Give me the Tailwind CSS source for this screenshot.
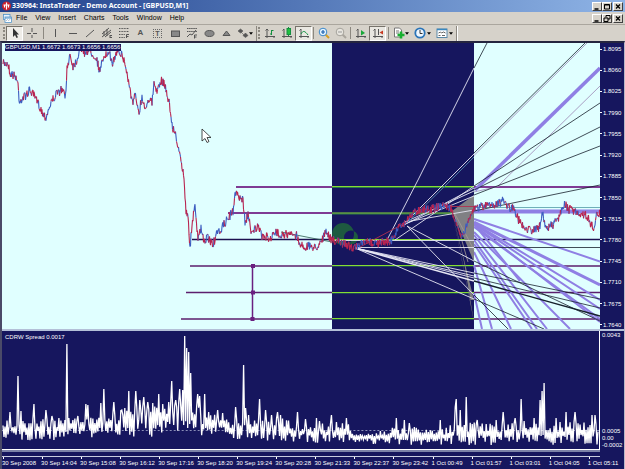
<!DOCTYPE html>
<html lang="en">
<head>
  <meta charset="UTF-8">
  <meta name="viewport" content="width=device-width, initial-scale=1.0">
  <title>330964: InstaTrader - Demo Account - [GBPUSD,M1]</title>
  <script src="https://cdn.jsdelivr.net/npm/@tailwindcss/browser@4"></script>
</head>
<body class="flex h-screen flex-col overflow-hidden bg-[#d6d2ca] font-['Liberation_Sans',Arial,sans-serif] text-[7px] leading-[10px] text-black">

  <!-- Title bar -->
  <header class="flex h-3 shrink-0 items-center bg-linear-to-r from-[#22418c] to-[#8fb4e6] pl-[2px] pr-[2px] text-white">
    <svg class="mr-px h-[10px] w-[9px]" viewBox="0 0 18 20">
      <circle cx="9" cy="10" r="9" fill="#c8202c"/>
      <path d="M9 3v14M5 8v5M13 8v5M3 8h12" stroke="#fff" stroke-width="2.400" fill="none"/>
    </svg>
    <h1 class="grow font-['Noto_Sans',sans-serif] font-bold whitespace-nowrap">330964: InstaTrader - Demo Account - [GBPUSD,M1]</h1>
    <div class="flex">
      <button aria-label="Minimize" class="h-[9px] w-[10px] border border-t-white border-l-white border-r-[#404040] border-b-[#404040] bg-[#d6d2ca]"><svg class="size-full" viewBox="0 0 8 7"><path d="M1.500 6h4" stroke="#000" stroke-width="1.500"/></svg></button>
      <button aria-label="Maximize" class="h-[9px] w-[10px] border border-t-white border-l-white border-r-[#404040] border-b-[#404040] bg-[#d6d2ca]"><svg class="size-full" viewBox="0 0 8 7"><path d="M1.500 1.500h5v4.500h-5zM1.500 2h5" stroke="#000" fill="none"/></svg></button>
      <button aria-label="Close" class="ml-px h-[9px] w-[10px] border border-t-white border-l-white border-r-[#404040] border-b-[#404040] bg-[#d6d2ca]"><svg class="size-full" viewBox="0 0 8 7"><path d="M2 1.500l4 4M6 1.500l-4 4" stroke="#000" stroke-width="1.300"/></svg></button>
    </div>
  </header>

  <!-- Menu -->
  <nav class="flex h-3 shrink-0 items-center pl-[3px] pr-[2px]">
    <svg class="mr-[4px] size-[9px]" viewBox="0 0 18 18">
      <rect x="1" y="1" width="13" height="10" fill="#e8f4ff" stroke="#4a90c8" stroke-width="1.500"/>
      <rect x="4" y="6" width="13" height="11" fill="#fff" stroke="#4a90c8" stroke-width="1.500"/>
      <path d="M4 8h13" stroke="#4a90c8" stroke-width="2"/><path d="M6 14l3-3 2 2 4-3" stroke="#68a" fill="none"/>
    </svg>
    <div class="flex grow gap-[8px]">
      <button>File</button>
      <button>View</button>
      <button>Insert</button>
      <button>Charts</button>
      <button>Tools</button>
      <button>Window</button>
      <button>Help</button>
    </div>
    <div class="flex">
      <button aria-label="Minimize chart" class="h-[9px] w-[10px] border border-t-white border-l-white border-r-[#404040] border-b-[#404040]"><svg class="size-full" viewBox="0 0 8 7"><path d="M1.500 6h4" stroke="#000" stroke-width="1.500"/></svg></button>
      <button aria-label="Restore chart" class="h-[9px] w-[10px] border border-t-white border-l-white border-r-[#404040] border-b-[#404040]"><svg class="size-full" viewBox="0 0 8 7"><path d="M3 2.500v-2h4v3.500h-2M1 3h4v3.500h-4z" stroke="#000" fill="none"/></svg></button>
      <button aria-label="Close chart" class="ml-px h-[9px] w-[10px] border border-t-white border-l-white border-r-[#404040] border-b-[#404040]"><svg class="size-full" viewBox="0 0 8 7"><path d="M2 1.500l4 4M6 1.500l-4 4" stroke="#000" stroke-width="1.300"/></svg></button>
    </div>
  </nav>

  <!-- Toolbar -->
  <div role="toolbar" class="flex h-[17px] shrink-0 items-center border-t border-[#aaa69e] pl-[3px] text-[#555]">
    <span class="mr-px h-3 border-l-2 border-dotted border-[#8c8880]"></span>
    <button aria-label="Cursor" class="flex h-[15px] w-[17px] items-center justify-center border border-t-[#77736b] border-l-[#77736b] border-r-white border-b-white bg-[#efede8]"><svg class="size-3" viewBox="0 0 12 12"><path d="M4 1v9l2-2 1.500 3 1.500-.8L7.500 7.500H10z" fill="#333"/></svg></button>
    <button aria-label="Crosshair" class="flex w-[17px] justify-center"><svg class="size-3" viewBox="0 0 12 12"><path d="M6 1v4M6 8v3M1 6.500h4M7 6.500h4" stroke="currentColor"/></svg></button>
    <span class="mx-[3px] h-3 w-px bg-[#8c8880]"></span>
    <button aria-label="Vertical line" class="flex w-[17px] justify-center"><svg class="size-3" viewBox="0 0 12 12"><path d="M5.500 2v8" stroke="currentColor"/></svg></button>
    <button aria-label="Horizontal line" class="flex w-[17px] justify-center"><svg class="size-3" viewBox="0 0 12 12"><path d="M2 6.500h8" stroke="currentColor"/></svg></button>
    <button aria-label="Trendline" class="flex w-[17px] justify-center"><svg class="size-3" viewBox="0 0 12 12"><path d="M2 10l8-7" stroke="currentColor"/></svg></button>
    <button aria-label="Channel" class="flex w-[17px] justify-center"><svg class="size-3" viewBox="0 0 12 12"><path d="M1 7l7-6M1 10l9-7M4 10l6-5M3 4v5M6 2v7M9 8v3M9 8.500h2M9 10.500h2" stroke="currentColor" fill="none"/></svg></button>
    <button aria-label="Fibonacci retracement" class="flex w-[17px] justify-center"><svg class="size-3" viewBox="0 0 12 12"><path d="M1 1.500h10M1 4.500h10M1 7.500h6M1 10.500h6" stroke="currentColor" stroke-dasharray="1 .6"/><path d="M8.500 11V7.500h2.500M8.500 9.500h2" stroke="currentColor" fill="none"/></svg></button>
    <button aria-label="Text" class="w-[17px] text-[8px] font-bold">A</button>
    <button aria-label="Text label" class="flex w-[17px] justify-center"><span class="h-[9px] w-[9px] border border-dotted border-[#666] text-center text-[7px] leading-[7px] font-bold">T</span></button>
    <button aria-label="Rectangle" class="flex w-[17px] justify-center"><svg class="size-3" viewBox="0 0 12 12"><rect x="2.500" y="4" width="8" height="5.500" fill="#888" stroke="currentColor"/></svg></button>
    <button aria-label="Fibonacci fan" class="flex w-[17px] justify-center"><svg class="size-3" viewBox="0 0 12 12"><path d="M1 1.500h10M1 4.500h10" stroke="currentColor" stroke-dasharray="1.500 .6"/><path d="M1 10l3-3 2 1 4-5M8.500 11.500V8h2.500M8.500 10h2" stroke="currentColor" fill="none"/></svg></button>
    <button aria-label="Ellipse" class="flex w-[17px] justify-center"><svg class="size-3" viewBox="0 0 12 12"><ellipse cx="6.500" cy="6.500" rx="4.500" ry="3" fill="#888" stroke="currentColor"/></svg></button>
    <button aria-label="Triangle" class="flex w-[17px] justify-center"><svg class="size-3" viewBox="0 0 12 12"><path d="M6.500 4L10 8.500H3z" fill="#888" stroke="currentColor"/></svg></button>
    <button aria-label="Arrows" class="flex w-[19px] items-center justify-end"><svg class="size-3" viewBox="0 0 12 12"><path d="M1 4l2.500-2L6 4 3.500 6zM6 8.500L8.500 6l2.500 2.500-2.500 2zM4 5l4 4" fill="#555" stroke="#555" stroke-width=".6"/></svg><svg class="h-[3px] w-[4px]" viewBox="0 0 5 3"><path d="M0 0h5L2.500 3z" fill="#000"/></svg></button>
    <span class="ml-[3px] mr-px h-[15px] w-px bg-[#8c8880]"></span>
    <span class="mr-px h-3 border-l-2 border-dotted border-[#8c8880]"></span>
    <button aria-label="Bar chart" class="flex w-[17px] justify-center"><svg class="size-3" viewBox="0 0 12 12"><path d="M3 2v9M1 9.500h10M10 9v2M1.500 3.500L3 2l1.500 1.500" stroke="currentColor" fill="none"/><path d="M7.500 3v5M7.500 3.500h2M6 7h1.500" stroke="#149040"/></svg></button>
    <button aria-label="Candlesticks" class="flex w-[17px] justify-center"><svg class="size-3" viewBox="0 0 12 12"><path d="M3 2v9M1 9.500h10M10 9v2M1.500 3.500L3 2" stroke="currentColor" fill="none"/><path d="M7.500 0v9" stroke="#149040"/><rect x="6" y="1.500" width="3.500" height="6" fill="#20c040" stroke="#149040"/></svg></button>
    <button aria-label="Line chart" class="flex h-[15px] w-[17px] items-center justify-center border border-t-[#77736b] border-l-[#77736b] border-r-white border-b-white bg-[#e9e7e1]"><svg class="size-3" viewBox="0 0 12 12"><path d="M3 2v9M1 9.500h10M10 9v2M1.500 3.500L3 2" stroke="currentColor" fill="none"/><path d="M3 7c2-4 4-3 7 1" stroke="#149040" fill="none"/></svg></button>
    <span class="mx-px h-3 w-px bg-[#8c8880]"></span>
    <button aria-label="Zoom in" class="flex w-[17px] justify-center"><svg class="size-3" viewBox="0 0 12 12"><path d="M7.500 7.500L11 11" stroke="#d8a020" stroke-width="2"/><circle cx="5" cy="5" r="3.800" fill="#e4f4ff" stroke="#3a86c8"/><path d="M3 5h4M5 3v4" stroke="#1a60b0" stroke-width="1.200"/></svg></button>
    <button aria-label="Zoom out" class="flex w-[17px] justify-center"><svg class="size-3" viewBox="0 0 12 12"><path d="M7.500 7.500L11 11" stroke="#aaa69e" stroke-width="2"/><circle cx="5" cy="5" r="3.800" fill="#e8e6e0" stroke="#a5a29b"/><path d="M3 5h4" stroke="#999"/></svg></button>
    <span class="mx-px h-3 w-px bg-[#8c8880]"></span>
    <button aria-label="Auto scroll" class="flex w-[17px] justify-center"><svg class="size-3" viewBox="0 0 12 12"><path d="M3 2v9M1 9.500h10M10 9v2M1.500 3.500L3 2" stroke="currentColor" fill="none"/><path d="M6 3l4 3-4 2.500z" fill="#18a838"/></svg></button>
    <button aria-label="Chart shift" class="flex h-[15px] w-[17px] items-center justify-center border border-t-[#77736b] border-l-[#77736b] border-r-white border-b-white bg-[#e9e7e1]"><svg class="size-3" viewBox="0 0 12 12"><path d="M3 2v9M1 9.500h10M10 9v2M1.500 3.500L3 2M6.500 2v6" stroke="currentColor" fill="none"/><path d="M11 3.500v4L7.500 5.500z" fill="#c83820"/></svg></button>
    <span class="mx-[2px] h-3 w-px bg-[#8c8880]"></span>
    <button aria-label="Indicators" class="flex w-[19px] items-center justify-center"><svg class="size-3" viewBox="0 0 12 12"><path d="M1.500 1h5l2 2v7h-7z" fill="#fff" stroke="#777"/><path d="M3 4h3M3 6h3" stroke="#777"/><path d="M8 4.500v7M4.500 8h7" stroke="#18b030" stroke-width="2.600"/></svg><svg class="h-[3px] w-[4px]" viewBox="0 0 5 3"><path d="M0 0h5L2.500 3z" fill="#000"/></svg></button>
    <button aria-label="Periodicity" class="ml-[3px] flex w-[19px] items-center justify-center"><svg class="mr-px size-3" viewBox="0 0 12 12"><circle cx="6" cy="6" r="4.700" fill="#eef7ff" stroke="#2a74b8" stroke-width="1.800"/><path d="M6 3v3.500h2.500" stroke="#333" fill="none"/></svg><svg class="h-[3px] w-[4px]" viewBox="0 0 5 3"><path d="M0 0h5L2.500 3z" fill="#000"/></svg></button>
    <button aria-label="Templates" class="ml-[3px] flex w-[19px] items-center justify-center"><svg class="mr-px size-3" viewBox="0 0 12 12"><rect x="1" y="2" width="10" height="8.500" fill="#fff" stroke="#5a88a8"/><path d="M1 2.500h10" stroke="#3a88c0" stroke-width="1.500"/><path d="M2.500 6l2-1 1 1 2-1 2 1M2.500 8.500h2M6 8.500h3" stroke="#666" fill="none"/></svg><svg class="h-[3px] w-[4px]" viewBox="0 0 5 3"><path d="M0 0h5L2.500 3z" fill="#000"/></svg></button>
    <span class="ml-[2px] h-[15px] w-[2px] border-l border-[#8c8880] bg-white"></span>
  </div>

  <!-- Chart window -->
  <main class="flex min-h-0 grow flex-col border-t-2 border-r border-l-2 border-t-[#25253f] border-r-[#b8b8c8] border-l-[#4a4a68] bg-[#16165e] text-[6px] leading-[8px] text-white">

    <section aria-label="GBPUSD price" class="flex min-h-0 flex-[286_1_0]">
      <div class="relative min-w-0 grow bg-[#e0ffff]">
        <svg class="absolute inset-0 size-full" viewBox="2 43 598 286" preserveAspectRatio="none" fill="none">
          <rect x="332" y="43" width="142" height="286" fill="#16165e"/>
          <path fill="#1e5a40" fill-rule="evenodd" d="M332 234a11 11 0 1 0 22 0a11 11 0 1 0 -22 0M344 237.500a7 7 0 1 0 14 0a7 7 0 1 0 -14 0"/>

          <!-- Levels -->
          <g stroke="#5c1f6e" stroke-width="1.300">
            <path d="M236 187H332M474 187H600M228 213H332" stroke="#7f3b94" stroke-width="2"/>
            <path d="M190 266H332M474 266H600M186 292.500H332M474 292.500H600M181 319H332M474 319H600"/>
            <path d="M192 239.500H332M474 239.500H600" stroke="#1c1050"/>
          </g>
          <path d="M332 187.500H474M332 214H474M332 240.500H474M332 266H474M332 293H474M332 319H474" stroke="#2b7a48"/>
          <path d="M332 186.500H474M332 213H474M332 239.500H474M332 265.500H474M332 292.500H474M332 318.500H474" stroke="#86dc34" stroke-width="1.200"/>
          <path d="M252.500 266V319" stroke="#6a1f80" stroke-width="1.500"/>
          <path d="M251 264h4v4h-4zM251 290.500h4v4h-4zM250.500 317h4v4h-4z" fill="#6a1f80"/>

          <!-- Wide fan -->
          <g stroke="#8f7fe4" stroke-width="2">
            <path d="M474 211.500H600" stroke-width="4"/>
            <path d="M475 190L600 68" stroke-width="3.500"/>
            <path d="M474 219L600 261.500"/>
            <path d="M474 222L600 285" stroke-width="3"/>
            <path d="M474 223L600 300M474 224L600 309M474 227L600 319"/>
            <path d="M474 225L600 322M474 232L570 329"/>
            <path d="M474 235L547 329M474 240L537 329M474 244L532 329M474 252L511 329"/>
            <path d="M474 265L492 329M474 293L482 329M474 224L520 281"/>
          </g>
          <path d="M474 207.500H600" stroke="#6fb0b8"/>
          <g stroke="#9a86b4" stroke-width=".8">
            <path d="M474 155.500L587 43M497 187L600 86M474 192L500 186"/>
          </g>
          <path d="M452 211L474 195V262L463 236zM452 211L474 300L470 300zM452 211L474 322L464 262z" fill="#808084"/>
          <path d="M454 213L468 262M455 214L474 250" stroke="#a59a94" stroke-width=".8"/>

          <!-- Thin rays, light over the night session -->
          <g stroke="#e6e6f4" stroke-width=".9">
            <path d="M387 240L418 180L474 68"/>
            <path d="M405 223L443 185L474 154"/>
            <path d="M395 240L474 186M402 226L474 188M405 222L474 191M405 222L474 210M405 224L474 196"/>
            <path d="M355 247.500H474M332 240.500H474"/>
            <path d="M355 248L474 273M355 248L474 278M355 248L474 299M355 248L474 276"/>
            <path d="M355 248L474 281" stroke-width="1.500"/>
            <path d="M407 226L474 261M407 226L474 295"/>
          </g>
          <path d="M408 222L446 185L474 157" stroke="#4a78a0"/>
          <g stroke="#16202c" stroke-width=".8">
            <path d="M474 68L487 43M474 153L585 43"/>
            <path d="M474 186L600 103M474 190L600 127M474 195L600 146M474 211L600 185"/>
            <path d="M474 247.500H600"/>
            <path d="M474 273L600 299M474 278L600 308M474 299L544 329M474 261L600 321M474 295L508 329"/>
            <path d="M474 281L600 316" stroke-width="1.300"/>
          </g>
          <path d="M281 232L332 242" stroke="#2c5c50" stroke-width=".8"/>
          <path d="M360 247L405 223M446 206.500H474" stroke="#b03050" stroke-width=".9"/>

          <path id="price-up" stroke="#3c5cc0" stroke-width="1.100"/>
          <path id="price-down" stroke="#b82450" stroke-width="1.100"/>

          <path d="M202 129v12l3-2.500 2 4 2-1-2-4h4z" fill="#fff" stroke="#222" stroke-width=".8"/>
        </svg>
        <p class="absolute top-[1px] left-[3px] bg-[#16165e] pr-px text-[6px] leading-[7px] whitespace-nowrap">GBPUSD,M1 1.6672 1.6673 1.6656 1.6656</p>
      </div>
      <ol id="price-axis" class="flex w-[24px] shrink-0 flex-col justify-between pt-[2px]"></ol>
    </section>

    <div class="h-[2px] shrink-0 bg-[#b4c0d8]"></div>

    <section aria-label="CDRW Spread" class="flex min-h-0 flex-[118_1_0]">
      <div class="relative min-w-0 grow border-r border-white">
        <svg class="absolute inset-0 size-full" viewBox="2 331 598 118" preserveAspectRatio="none" fill="none">
          <path d="M2 430.500H600" stroke="#8c90b8" stroke-dasharray="2 2"/>
          <path id="spread" stroke="#fff" stroke-width="1.300"/>
        </svg>
        <p class="absolute top-[2px] left-[3px] whitespace-nowrap">CDRW Spread 0.0017</p>
      </div>
      <div class="flex w-[24px] shrink-0 flex-col pl-[2px]">
        <span class="grow">0.0043</span>
        <span>0.0005</span>
        <span class="leading-[7px]">0.00</span>
        <span class="leading-[7px]">-0.0002</span>
      </div>
    </section>

    <div class="mr-[24px] h-[3px] shrink-0 border-t border-white bg-[#7c82a8]"></div>

    <div class="h-[17px] shrink-0 pt-[4px]">
      <div class="mr-[24px] border-t border-[#c8cce0]"></div>
      <ol id="time-axis" class="flex"></ol>
    </div>
  </main>

  <script>
    // Small seeded generator so the chart is the same on every load
    let seed = 7;
    function rnd() {
      seed = (seed * 16807) % 2147483647;
      return seed / 2147483647;
    }

    // Price turning points, x,y
    const price = [3,64,8,63,10,73,16,77,18,84,19,100,22,99,26,95,30,90,34,96,40,107,43,114,46,117,50,105,54,97,61,90,66,95,67,68,
      70,54,73,66,77,60,80,46,84,53,89,50,96,57,100,72,104,55,110,56,113,63,118,48,124,60,128,78,130,90,133,105,135,95,139,111,
      142,97,145,108,149,98,152,103,154,85,158,91,161,81,164,82,169,102,172,125,177,140,180,158,183,172,184,178,186,212,188,213,
      190,251,192,222,195,208,198,240,201,228,204,244,207,236,213,245,216,236,222,228,228,218,233,212,236,188,238,196,243,200,
      245,222,248,215,251,230,258,228,262,236,270,238,276,233,283,234,290,235,297,235,300,245,305,247,310,246,316,248,320,242,
      326,233,332,240,345,244,355,248,366,242,380,243,393,240,399,225,405,223,412,214,421,209,432,209,445,205,452,210,456,226,
      461,235,466,228,470,215,474,209,480,207,490,204,498,204,504,200,508,207,514,209,518,219,524,227,530,230,539,229,543,211,
      545,229,554,224,560,215,565,204,568,209,580,213,587,216,594,230,597,212,600,213];
    let up = '', down = '';
    let px = price[0], py = price[1];
    for (let i = 2; i < price.length; i += 2) {
      const x0 = price[i - 2], y0 = price[i - 1], x1 = price[i], y1 = price[i + 1];
      for (let x = x0 + 0.5; x <= x1; x += 0.5) {
        const y = y0 + (y1 - y0) * (x - x0) / (x1 - x0) + (rnd() - 0.5) * 9;
        const seg = `M${px} ${py}L${x} ${y.toFixed(1)}`;
        if (rnd() < (y1 < y0 ? 0.65 : 0.35)) up += seg; else down += seg;
        px = x;
        py = y.toFixed(1);
      }
    }
    document.getElementById('price-up').setAttribute('d', up);
    document.getElementById('price-down').setAttribute('d', down);

    // Spread peaks by x, everything between them is noise
    const peaks = {10:412,18:376,21:411,34:404,46:410,52:416,67:344,78:416,86:404,88:405,101:403,104:389,114:402,122:410,125:408,129:391,
      136:391,140:400,144:397,148:402,153:403,159:394,163:404,169:402,172:381,176:400,180:389,183:390,185:336,187:348,189:352,191:373,
      198:394,200:396,205:394,209:412,218:410,223:413,236:407,244:365,246:408,249:415,260:399,266:410,272:415,278:412,281:415,298:412,
      306:419,317:418,320:421,332:415,337:422,347:418,397:418,405:420,410:423,441:420,456:407,457:399,461:410,467:397,473:424,
      478:420,497:420,504:412,516:418,522:399,525:421,535:418,541:400,543:391,545:383,557:418,567:412,576:412,593:415,596:415};
    // [until x, highest, lowest]
    const noise = [[60,415,441],[95,415,438],[120,412,437],[160,402,437],[200,398,434],[230,412,436],[290,416,441],[350,421,443],
      [390,429,444],[450,425,445],[520,420,445],[600,419,445]];
    let d = '';
    for (let x = 3; x < 600; x++) {
      const n = noise.find(r => x <= r[0]);
      const base = x % 2 ? 0.1 : 0.6;
      const y = peaks[x] || n[1] + (n[2] - n[1]) * (base + rnd() * 0.4);
      d += `${d ? 'L' : 'M'}${x} ${(+y).toFixed(1)}`;
    }
    document.getElementById('spread').setAttribute('d', d);

    const prices = ['1.8095', '1.8060', '1.8025', '1.7990', '1.7955', '1.7920', '1.7885', '1.7850', '1.7815', '1.7780', '1.7745', '1.7710', '1.7675', '1.7640'];
    document.getElementById('price-axis').innerHTML = prices.map(p =>
      `<li class="flex items-center"><span class="mr-px h-px w-[2px] bg-white"></span>${p}</li>`).join('');

    const times = ['30 Sep 2008', '30 Sep 14:04', '30 Sep 15:08', '30 Sep 16:12', '30 Sep 17:16', '30 Sep 18:20', '30 Sep 19:24', '30 Sep 20:28',
      '30 Sep 21:33', '30 Sep 22:37', '30 Sep 23:42', '1 Oct 00:49', '1 Oct 01:57', '1 Oct 03:01', '1 Oct 04:05', '1 Oct 05:11'];
    document.getElementById('time-axis').innerHTML = times.map(t =>
      `<li class="w-[6.28%] shrink-0 whitespace-nowrap"><span class="ml-px block h-[2px] w-px bg-white"></span>${t}</li>`).join('');
  </script>
</body>
</html>
